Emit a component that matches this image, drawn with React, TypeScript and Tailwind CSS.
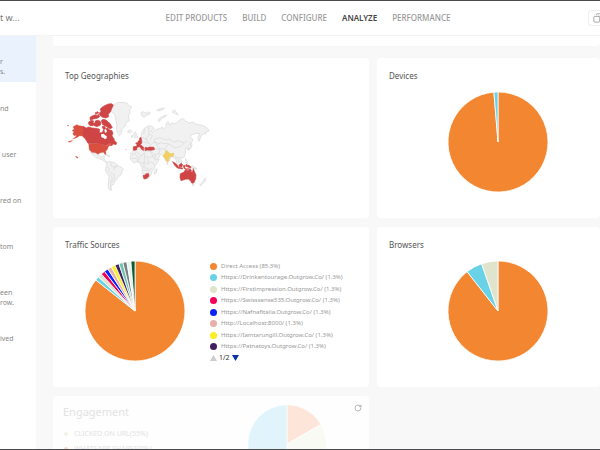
import { Copy, RotateCw } from "lucide-react";
import type { ReactNode } from "react";

interface Slice {
  label: string;
  value: number;
  color: string;
}

interface PieProps {
  slices: Slice[];
  title: string;
  className?: string;
}

const nav_links = ["Edit Products", "Build", "Configure", "Analyze", "Performance"];

const sidebar_items = [
  ["r", "s."],
  ["nd"],
  [" user"],
  ["red on"],
  ["tom"],
  ["een", "row."],
  ["ived"],
];

const devices: Slice[] = [
  { label: "Desktop", value: 98.7, color: "#f38630" },
  { label: "Mobile", value: 1.3, color: "#69d2e7" },
];

const browsers: Slice[] = [
  { label: "Chrome", value: 89.4, color: "#f38630" },
  { label: "Safari", value: 5.3, color: "#69d2e7" },
  { label: "Firefox", value: 5.3, color: "#e0e4cc" },
];

const sources: Slice[] = [
  { label: "Direct Access", value: 85.3, color: "#f38630" },
  { label: "Https://Drinkentourage.Outgrow.Co/", value: 1.3, color: "#69d2e7" },
  { label: "Https://Firstimpression.Outgrow.Co/", value: 1.3, color: "#e0e4cc" },
  { label: "Https://Swisssense535.Outgrow.Co/", value: 1.3, color: "#f50057" },
  { label: "Https://Nafnafitalia.Outgrow.Co/", value: 1.3, color: "#0b24fb" },
  { label: "Http://Localhost:8000/", value: 1.3, color: "#e8aea8" },
  { label: "Https://Iamtarungill.Outgrow.Co/", value: 1.3, color: "#fbee23" },
  { label: "Https://Patnatoys.Outgrow.Co/", value: 1.3, color: "#42205e" },
  { label: "Source 9", value: 1.3, color: "#6cc4ae" },
  { label: "Source 10", value: 1.3, color: "#7b8084" },
  { label: "Source 11", value: 1.3, color: "#e4f6ec" },
  { label: "Source 12", value: 1.3, color: "#0a5a32" },
];

const engagement: Slice[] = [
  { label: "Whatsapp shares", value: 16.7, color: "#fde6d9" },
  { label: "Clicked on url", value: 33.3, color: "#f9faf4" },
  { label: "Other", value: 50, color: "#e1f4fb" },
];

function Pie({ slices, title, className }: PieProps) {
  const total = slices.reduce((sum, s) => sum + s.value, 0);
  let start = 0;
  const wedges = slices.map((s) => {
    const end = start + (s.value / total) * Math.PI * 2;
    const large = end - start > Math.PI ? 1 : 0;
    const d = `M50 50L${50 + 50 * Math.sin(start)} ${50 - 50 * Math.cos(start)}A50 50 0 ${large} 1 ${
      50 + 50 * Math.sin(end)
    } ${50 - 50 * Math.cos(end)}Z`;
    start = end;
    return <path key={s.label} d={d} fill={s.color} />;
  });
  return (
    <svg viewBox="-1 -1 102 102" role="img" aria-label={title} className={className}>
      <g stroke="#fff" strokeWidth="0.8" strokeLinejoin="bevel">
        {wedges}
      </g>
    </svg>
  );
}

function WorldMap() {
  return (
    <svg viewBox="0 0 450 330" role="img" aria-label="Top geographies" className="h-[110px] w-[150px]">
      <g fill="#f1f1f1" stroke="#d8d8d8" strokeWidth="2" strokeLinejoin="round">
        {/* greenland, iceland */}
        <path d="M146 49L155 43 165 43 172 38 190 37 202 40 205 46 216 51 209 60 210 70 205 78 208 92 198 98 195 109 186 118 183 130 179 137 173 130 169 118 171 105 168 92 165 76 157 66 150 62Z" />
        <path d="M203 123l8-3 5 4-5 5-7-2z" />
        {/* central and south america */}
        <path d="M91 187L104 189 112 193 120 200 126 201 131 196 134 201 130 206 135 209 139 216 145 219 142 221 134 215 127 209 118 207 107 202Z" />
        <path d="M132 193l10 1 8 5-5 0-8-3z" />
        <path d="M140 222L147 214 155 215 163 217 170 222 173 228 184 231 190 237 186 246 184 254 175 260 171 268 164 275 161 283 154 286 152 292 156 301 148 300 144 289 146 270 147 258 141 251 136 240 138 231Z" />
        {/* africa */}
        <path d="M220 182L228 179 244 177 247 183 256 186 260 183 275 185 281 197 287 207 298 207 294 216 284 228 282 237 276 243 274 253 267 262 256 268 251 264 249 253 246 243 247 234 242 225 240 219 230 216 221 219 214 212 210 205 214 193Z" />
        <path d="M286 239l5-3-2 13-5 4-2-6z" />
        {/* eurasia */}
        <path d="M244 139L246 126 253 115 264 107 277 109 283 117 274 122 277 127 289 118 302 115 307 111 310 118 319 109 318 101 324 94 329 105 334 99 347 101 355 93 368 85 377 93 388 99 398 96 409 103 428 106 444 116 448 123 438 125 437 131 427 132 421 145 417 154 414 145 419 131 407 130 394 135 391 143 399 148 394 160 384 168 386 180 380 174 376 176 377 187 373 201 361 205 366 215 362 222 355 215 353 222 359 235 351 229 349 212 343 203 334 200 325 217 316 211 310 197 295 190 300 200 286 211 276 194 272 184 256 178 248 179 237 170 229 160 240 149Z" />
        <path d="M221 130l5-5 3 7 4 10-10 2 4-7-5-3zM214 137l5-2 1 5-5 3z" />
        {/* islands of the north */}
        <path d="M242 68l7-3 8 4 8-3 7 3-5 5-8 1-6 7-6-3zM290 61l10-5 14-2-8 6-9 3zM294 92l5-8 13-7 9-2-5 5-11 5-7 10zM336 66l7-7 7 9 5 7-9-4z" />
        {/* japan, philippines, new guinea, new zealand */}
        <path d="M391 158l5 6-1 7-8 9-4 0 8-8zM376 205l3 5 4 10-4-1zM378 224l5-5-1 10-5 2zM393 229l7 0 12 8-9-1-9-3zM435 264l3 6-5 6-11 11-3-1 9-11z" />
        <path d="M321 218l3 4-3 2zM397 283l4-1 1 4-4 1z" />
      </g>
      <g fill="none" stroke="#d8d8d8" strokeWidth="2">
        <path d="M154 217l-2 9 9 5 10-6M141 231l7 4-3 9 9 6 9 4 1 13-8 5 5 5M150 254l7 8-5 17 1 17M173 229l-12 5 3 5" />
        <path d="M216 197l14-12 14 12 9-8v11l14 2 12-3M223 190l12 12-4 13M244 197l-7 10-1 9M253 200v16l9 7 13-8 9 9M241 220l12-3M253 217l-2 16 12 2 5 10-8 8M246 240l18 2 12-7M263 205l2 14M214 205h17M251 251l11-1" />
        <path d="M254 116l-3 17M266 110l1 22-9 17 8 10 6 5M267 132l10 5-7 14M247 142l16 8M272 164l11-8 14 5M248 155l19 5M285 157l-2-9 17-5 20 8 7-5 14 10 16-4 17 7 6-7M283 157l8 9 11-8 14 3 10 0M291 166l9 11 14-1 13-14M328 162l15 11 19-3 9-10M300 177l-3 13M314 176l5 12 20 5 8 8 15 3M274 185l10 10 12-5M284 195l4 12M282 177l18 0M345 203l10 5 2 8" />
      </g>
      {/* north america */}
      <g fill="#cf4545" stroke="#cf4545" strokeWidth="2" strokeLinejoin="round">
        <path d="M69 109L79 114 86 111 96 114 106 115 114 116 119 118 118 128 126 128 131 119 126 110 134 109 137 116 143 114 148 119 156 122 159 130 156 137 158 141 163 147 162 151 170 158 168 164 161 162 156 166 151 167 151 159 145 162 136 168 131 165 124 162 84 160 75 145 68 137 66 124Z" />
        <path d="M138 45L145 42 155 41 160 46 156 54 151 66 145 73 146 80 137 84 128 82 120 76 117 70 123 65 121 57 128 50Z" />
        <path d="M86 96l9-5 6 2-2 5 5 3-5 6-8 0-5-4zM90 82l8-5 9-3 5 3 3-5 4 8-7 5-12 2-9 4zM107 92l9-1 7 6-2 9-11 4-9-4zM124 92l5-4 9 2 7 6 6 6 6 11-7 3-10-6-12-6zM105 69l8-4 3 3-7 4z" />
      </g>
      <path fill="#fff" d="M123 133l8-2 4 5 5 2 0 7-5 3-4-4-7-2zM133 119l5-2 3 8-6 4z" />
      <g fill="#d94f40" stroke="#d94f40" strokeWidth="1" strokeLinejoin="round">
        <path d="M69 109L58 107 50 104 39 111 43 118 36 121 42 126 38 132 43 137 50 136 46 142 38 147 50 143 59 137 67 138 76 147 79 145 68 136Z" />
        <path d="M24 155l10-3 4 0-10 5zM22 105l5 2-3 1zM46 198l7 3 1 4-4-2z" />
        <path d="M86 161L124 162 131 166 138 169 145 163 150 160 149 167 144 171 143 177 137 184 138 193 134 192 131 187 121 188 114 193 107 188 96 187 88 180Z" />
      </g>
      {/* europe, africa, oceania */}
      <g fill="#cf4545" stroke="#cf4545" strokeWidth="2" strokeLinejoin="round">
        <path d="M220 170L230 169 231 164 227 159 234 158 235 153 239 151 239 144 243 142 245 152 245 160 240 164 246 167 253 175 248 174 252 181 246 179 239 170 232 172 229 180 220 181Z" />
        <path d="M256 172l7 1 6-2 13 1 1 7-11 2-10-1-7 2z" />
        <path d="M249 257l6-2 4-4 7 0 1 7-6 7-9 2z" />
        <path d="M338 215l7 4 7 7 4 6 12 2-1 3-15-3-8-8zM357 225l7-5 4 4-3 7-7-1zM370 227l6-1-2 5 2 5-4-1zM379 223l3 3 5 0 6 5-2 4-7-4-6-2zM375 237l11-1-6 3z" />
        <path d="M361 251L371 247 376 240 383 242 388 237 394 240 393 245 397 247 400 236 404 247 408 255 407 266 402 278 396 280 390 271 385 267 376 268 363 272 360 262Z" />
      </g>
      <path fill="#cf4545" d="M197 177l3 1-2 2zM209 188l5 1-4 1z" />
      <path fill="#f4cf5c" stroke="#dcc069" d="M319 180L325 186 330 191 342 189 339 200 334 198 328 204 325 214 321 217 316 206 309 199 314 191Z" />
    </svg>
  );
}

function Card({ title, children }: { title: string; children: ReactNode }) {
  return (
    <section className="flex h-40 flex-col rounded-sm bg-white px-3 pt-3">
      <h2 className="text-[8px] leading-[11px] text-[#555]">{title}</h2>
      {children}
    </section>
  );
}

export default function App() {
  return (
    <div className="flex h-screen flex-col overflow-hidden border-y border-[#4b4b4d] bg-[#f8f8f8] font-['Noto_Sans',sans-serif]">
      <header className="flex h-[35px] shrink-0 items-center justify-between border-b border-[#f3f3f3] bg-white">
        <h1 className="w-[150px] text-[9px] text-[#777]">t w...</h1>
        <nav className="flex gap-[15px] text-[8px] font-medium whitespace-nowrap uppercase">
          {nav_links.map((link) => (
            <a key={link} href="#" className={link === "Analyze" ? "font-semibold text-[#444]" : "text-[#999]"}>
              {link}
            </a>
          ))}
        </nav>
        <div className="flex w-[134px] justify-end">
          <button
            aria-label="Copy"
            className="flex h-4 w-3 items-center overflow-hidden rounded-l-sm border border-r-0 border-[#eee] pl-1 text-[#999]"
          >
            <Copy className="h-[10px] w-[10px] shrink-0 -scale-x-100" />
          </button>
        </div>
      </header>

      <div className="flex min-h-0 flex-1">
        <aside className="w-9 shrink-0 overflow-hidden bg-white text-[7px] leading-[10px] text-[#888]">
          <ul>
            {sidebar_items.map((lines, i) => (
              <li key={i} className={i === 0 ? "h-[46px] bg-[#e9f2fd] pt-[21px]" : "h-[46px] pt-[22px]"}>
                {lines.map((line) => (
                  <p key={line} className="whitespace-pre">
                    {line}
                  </p>
                ))}
              </li>
            ))}
          </ul>
        </aside>

        <main className="min-w-0 flex-1 overflow-hidden pl-[17px]">
          <div className="h-[10px] rounded-b-sm bg-white" />
          <div className="grid grid-cols-[316fr_223fr] gap-x-2 gap-y-[9px] pt-3">
            <Card title="Top Geographies">
              <div className="-ml-[5px] pt-[9px]">
                <WorldMap />
              </div>
            </Card>
            <Card title="Devices">
              <Pie slices={devices} title="Devices" className="mt-[10px] ml-[58px] h-[102px] w-[102px]" />
            </Card>

            <Card title="Traffic Sources">
              <div className="flex pt-[10px]">
                <Pie slices={sources} title="Traffic sources" className="ml-[19px] h-[102px] w-[102px] shrink-0" />
                <div className="ml-6 pt-px text-[#999]">
                  <ul className="flex h-[91px] flex-col justify-between text-[6px] leading-[11px] whitespace-nowrap">
                    {sources.slice(0, 8).map((s) => (
                      <li key={s.label} className="flex items-center gap-1">
                        <span className="h-[7px] w-[7px] rounded-full" style={{ backgroundColor: s.color }} />
                        {s.label} ({s.value}%)
                      </li>
                    ))}
                  </ul>
                  <div className="flex items-center gap-[2px] text-[7px] leading-[12px] text-[#333]">
                    <button aria-label="Previous page">
                      <svg viewBox="0 0 7 6" className="h-[6px] w-[7px]">
                        <path d="M3.5 0L7 6H0Z" fill="#ccc" />
                      </svg>
                    </button>
                    1/2
                    <button aria-label="Next page">
                      <svg viewBox="0 0 7 6" className="h-[6px] w-[7px]">
                        <path d="M0 0H7L3.5 6Z" fill="#0b33a4" />
                      </svg>
                    </button>
                  </div>
                </div>
              </div>
            </Card>
            <Card title="Browsers">
              <Pie slices={browsers} title="Browsers" className="mt-[10px] ml-[58px] h-[102px] w-[102px]" />
            </Card>

            <section className="flex justify-between rounded-sm bg-[#fefefe] pt-2 pr-[7px] pl-[10px]">
              <div className="w-[176px] text-[#e3e3e3]">
                <h2 className="text-[11px] leading-4">Engagement</h2>
                <ul className="pt-[6px] text-[7px] leading-[15px]">
                  <li className="flex items-center gap-[6px]">
                    <span className="ml-px h-1 w-1 rounded-full bg-[#f1f3e8]" />
                    CLICKED ON URL(55%)
                  </li>
                  <li className="flex items-center gap-[6px]">
                    <span className="ml-px h-1 w-1 rounded-full bg-[#fbd9c4]" />
                    WHATSAPP SHARES(0%)
                  </li>
                </ul>
              </div>
              <Pie slices={engagement} title="Engagement" className="h-20 w-20 shrink-0" />
              <button aria-label="Refresh" className="ml-5 h-2 w-2 text-[#999]">
                <RotateCw className="h-2 w-2" />
              </button>
            </section>
          </div>
        </main>
      </div>
    </div>
  );
}
